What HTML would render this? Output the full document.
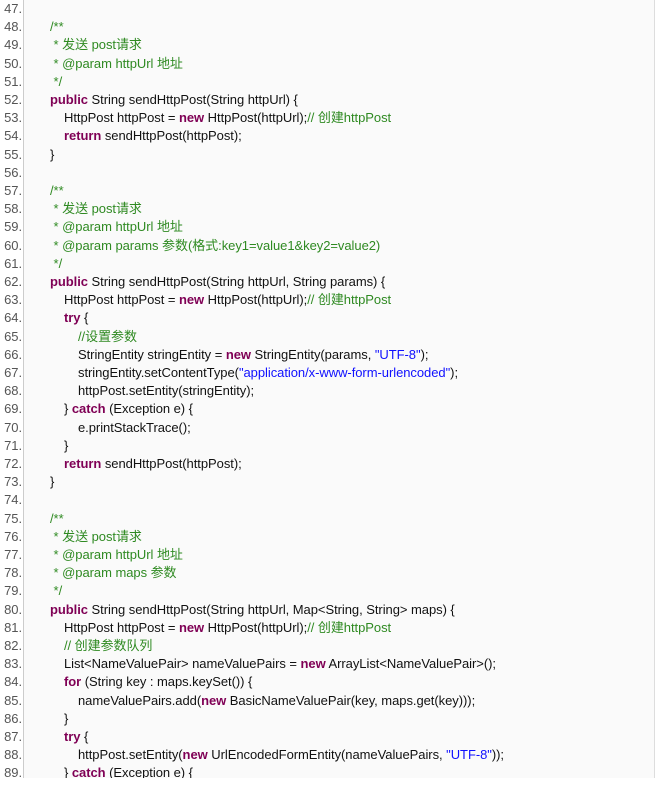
<!DOCTYPE html>
<html><head><meta charset="utf-8"><style>
body{margin:0;background:#fff;width:656px;height:809px;overflow:hidden;font-family:"Liberation Sans","Noto Sans CJK SC",sans-serif;font-size:13px;letter-spacing:-0.05px}
.box{position:absolute;left:0;top:0;width:654px;height:778px;background:#fafafa;border-right:1px solid #ddd;overflow:hidden}
.g{position:absolute;left:0;top:0;width:23px;height:778px;background:#fff;border-right:1px solid #ccc}
.l{position:absolute;left:0;height:18.2px;line-height:18.2px;white-space:pre;width:656px}
.n{position:absolute;right:634px;color:#555;text-align:right}
.c{position:absolute;left:36px;color:#111}
.k{color:#7f0055;font-weight:bold}.m{color:#2f8a22}.s{color:#1010ff}
</style></head><body><div class="box"><div class="g"></div>
<div id="w"></div></div>
<script>
var L=[
"",
"<span class=m>/**</span>",
"<span class=m> * 发送 post请求</span>",
"<span class=m> * @param httpUrl 地址</span>",
"<span class=m> */</span>",
"<span class=k>public</span> String sendHttpPost(String httpUrl) {",
"    HttpPost httpPost = <span class=k>new</span> HttpPost(httpUrl);<span class=m>// 创建httpPost</span>",
"    <span class=k>return</span> sendHttpPost(httpPost);",
"}",
"",
"<span class=m>/**</span>",
"<span class=m> * 发送 post请求</span>",
"<span class=m> * @param httpUrl 地址</span>",
"<span class=m> * @param params 参数(格式:key1=value1&amp;key2=value2)</span>",
"<span class=m> */</span>",
"<span class=k>public</span> String sendHttpPost(String httpUrl, String params) {",
"    HttpPost httpPost = <span class=k>new</span> HttpPost(httpUrl);<span class=m>// 创建httpPost</span>",
"    <span class=k>try</span> {",
"        <span class=m>//设置参数</span>",
"        StringEntity stringEntity = <span class=k>new</span> StringEntity(params, <span class=s>\"UTF-8\"</span>);",
"        stringEntity.setContentType(<span class=s>\"application/x-www-form-urlencoded\"</span>);",
"        httpPost.setEntity(stringEntity);",
"    } <span class=k>catch</span> (Exception e) {",
"        e.printStackTrace();",
"    }",
"    <span class=k>return</span> sendHttpPost(httpPost);",
"}",
"",
"<span class=m>/**</span>",
"<span class=m> * 发送 post请求</span>",
"<span class=m> * @param httpUrl 地址</span>",
"<span class=m> * @param maps 参数</span>",
"<span class=m> */</span>",
"<span class=k>public</span> String sendHttpPost(String httpUrl, Map&lt;String, String&gt; maps) {",
"    HttpPost httpPost = <span class=k>new</span> HttpPost(httpUrl);<span class=m>// 创建httpPost</span>",
"    <span class=m>// 创建参数队列</span>",
"    List&lt;NameValuePair&gt; nameValuePairs = <span class=k>new</span> ArrayList&lt;NameValuePair&gt;();",
"    <span class=k>for</span> (String key : maps.keySet()) {",
"        nameValuePairs.add(<span class=k>new</span> BasicNameValuePair(key, maps.get(key)));",
"    }",
"    <span class=k>try</span> {",
"        httpPost.setEntity(<span class=k>new</span> UrlEncodedFormEntity(nameValuePairs, <span class=s>\"UTF-8\"</span>));",
"    } <span class=k>catch</span> (Exception e) {",
"        e.printStackTrace();"
];
var h="";
for(var i=0;i<L.length;i++){
 var t=L[i],ind=0;while(t.charAt(ind)==" ")ind++;
 var lv=Math.floor(ind/4),rest=t.slice(lv*4);
 h+='<div class="l" style="top:'+(i*18.2)+'px"><span class="n">'+(47+i)+'.</span><span class="c" style="left:'+(50+lv*14)+'px">'+rest+'</span></div>';
}
document.getElementById("w").innerHTML=h;
</script></body></html>
